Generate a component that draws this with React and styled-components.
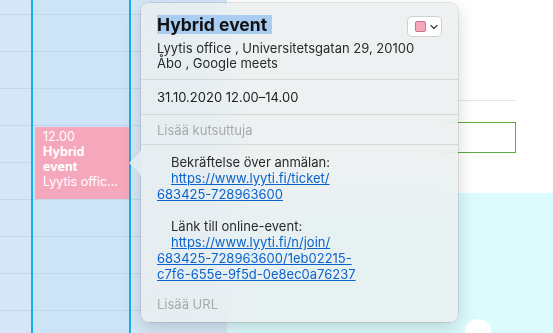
import React from 'react';
import styled, { createGlobalStyle } from 'styled-components';

const GlobalStyle = createGlobalStyle`
  html, body {
    margin: 0;
    padding: 0;
    width: 553px;
    height: 333px;
    overflow: hidden;
  }
  body {
    font-family: Inter, "Noto Sans", "Liberation Sans", sans-serif;
    -webkit-font-smoothing: antialiased;
  }
`;

const Screen = styled.div`
  position: relative;
  display: flex;
  width: 553px;
  height: 333px;
  overflow: hidden;
`;

const Calendar = styled.div`
  display: flex;
  width: 227px;
  height: 100%;
  background-color: #d6e8f8;
  background-image: repeating-linear-gradient(
    to bottom,
    transparent 0px,
    transparent 14px,
    #c3d8ec 14px,
    #c3d8ec 15px,
    transparent 15px,
    transparent 37px
  );
`;

const Gutter = styled.div`
  width: 31px;
  flex: none;
`;

const DayColumn = styled.div`
  position: relative;
  width: 96px;
  flex: none;
  border-left: 2px solid #17aef0;
  border-right: 2px solid #17aef0;
  background: rgba(180, 210, 240, 0.25);
`;

const NextColumn = styled.div`
  flex: 1;
`;

const EventBlock = styled.div`
  position: absolute;
  left: 2px;
  right: 0;
  top: 127px;
  height: 72px;
  background: #f5a8bc;
  padding: 2px 8px;
  box-sizing: border-box;
  color: #fff;
  font-size: 12.5px;
  line-height: 15px;
`;

const EventLine = styled.div`
  font-weight: ${p => (p.$bold ? 700 : 400)};
  white-space: nowrap;
`;

const WebPage = styled.div`
  flex: 1;
  display: flex;
  flex-direction: column;
  background: #fff;
`;

const PageTop = styled.div`
  height: 193px;
  display: flex;
  flex-direction: column;
  align-items: flex-end;
  padding-right: 37px;
  box-sizing: border-box;
`;

const Rule = styled.div`
  width: 100%;
  height: 1px;
  background: #e6e6e6;
  margin-top: 100px;
`;

const FieldBox = styled.div`
  width: 100%;
  height: 31px;
  margin-top: 21px;
  border: 1px solid #5cab3f;
  box-sizing: border-box;
`;

const Hero = styled.div`
  position: relative;
  flex: 1;
  background: #dcfbfd;
`;

const Cloud = styled.div`
  position: absolute;
  left: 238px;
  top: 126px;
  width: 26px;
  height: 22px;
  border-radius: 50%;
  background: #fff;
`;

const Popover = styled.div`
  position: absolute;
  left: 141px;
  top: 3px;
  width: 317px;
  height: 319px;
  box-sizing: border-box;
  border-radius: 8px;
  background: rgba(234, 238, 240, 0.84);
  backdrop-filter: blur(18px);
  box-shadow: 0 0 0 0.5px rgba(0, 0, 0, 0.18), 0 6px 18px rgba(0, 0, 0, 0.16);
  color: #222;
  font-size: 13px;

  &::before {
    content: '';
    position: absolute;
    left: -12px;
    top: 147px;
    width: 0;
    height: 0;
    border-top: 13px solid transparent;
    border-bottom: 13px solid transparent;
    border-right: 12px solid rgba(226, 236, 242, 0.95);
    filter: drop-shadow(-1px 0 0 rgba(0, 0, 0, 0.08));
  }
`;

const Header = styled.div`
  padding: 12px 16px 8px 16px;
  border-bottom: 1px solid #d6d8d8;
`;

const TitleRow = styled.div`
  display: flex;
  align-items: flex-start;
  justify-content: space-between;
`;

const Title = styled.span`
  font-size: 17.5px;
  font-weight: 700;
  line-height: 19px;
  color: #111;
  background: #a9cdf1;
  padding-right: 5px;
`;

const ColorPicker = styled.button`
  display: flex;
  align-items: center;
  gap: 4px;
  width: 35px;
  height: 21px;
  margin-top: 1px;
  padding: 0 0 0 7px;
  border: 1px solid #d0d0d0;
  border-radius: 5px;
  background: #fff;
  box-sizing: border-box;
`;

const Swatch = styled.span`
  width: 11px;
  height: 11px;
  border-radius: 2px;
  background: #f5a8bc;
  border: 1px solid #c8748c;
  box-sizing: border-box;
`;

const Address = styled.div`
  margin-top: 4px;
  line-height: 15px;
  color: #2a2a2a;
  width: 268px;
`;

const Section = styled.div`
  padding: 0 16px;
  height: ${p => p.$h}px;
  display: flex;
  align-items: center;
  border-bottom: 1px solid #d6d8d8;
  color: ${p => (p.$muted ? '#a8abad' : '#222')};
`;

const Notes = styled.div`
  padding: 9px 16px 0 16px;
  line-height: 16px;
  color: #2a2a2a;
`;

const Para = styled.p`
  margin: 0 0 ${p => (p.$last ? 0 : 16)}px 0;
`;

const Indented = styled.span`
  padding-left: 14px;
`;

const Link = styled.a`
  color: #0a63cd;
  text-decoration: underline;
`;

const AddUrl = styled.div`
  padding: 14px 16px 0 16px;
  line-height: 16px;
  color: #a8abad;
`;

const Chevron = () => (
  <svg width="8" height="6" viewBox="0 0 8 6">
    <path d="M1 1.5 L4 4.5 L7 1.5" fill="none" stroke="#444" strokeWidth="1.3" strokeLinecap="round" strokeLinejoin="round" />
  </svg>
);

export default function App() {
  return (
    <>
      <GlobalStyle />
      <Screen>
        <Calendar>
          <Gutter />
          <DayColumn>
            <EventBlock>
              <EventLine>12.00</EventLine>
              <EventLine $bold>Hybrid</EventLine>
              <EventLine $bold>event</EventLine>
              <EventLine>Lyytis offic...</EventLine>
            </EventBlock>
          </DayColumn>
          <NextColumn />
        </Calendar>
        <WebPage>
          <PageTop>
            <Rule />
            <FieldBox />
          </PageTop>
          <Hero>
            <Cloud />
          </Hero>
        </WebPage>

        <Popover>
          <Header>
            <TitleRow>
              <Title>Hybrid event</Title>
              <ColorPicker>
                <Swatch />
                <Chevron />
              </ColorPicker>
            </TitleRow>
            <Address>Lyytis office , Universitetsgatan 29, 20100 Åbo , Google meets</Address>
          </Header>
          <Section $h={34}>31.10.2020 12.00–14.00</Section>
          <Section $h={29} $muted>Lisää kutsuttuja</Section>
          <Notes>
            <Para>
              <Indented>Bekräftelse över anmälan:</Indented><br />
              <Indented><Link href="#">https://www.lyyti.fi/ticket/</Link></Indented><br />
              <Link href="#">683425-728963600</Link>
            </Para>
            <Para $last>
              <Indented>Länk till online-event:</Indented><br />
              <Indented><Link href="#">https://www.lyyti.fi/n/join/</Link></Indented><br />
              <Link href="#">683425-728963600/1eb02215-</Link><br />
              <Link href="#">c7f6-655e-9f5d-0e8ec0a76237</Link>
            </Para>
          </Notes>
          <AddUrl>Lisää URL</AddUrl>
        </Popover>
      </Screen>
    </>
  );
}
